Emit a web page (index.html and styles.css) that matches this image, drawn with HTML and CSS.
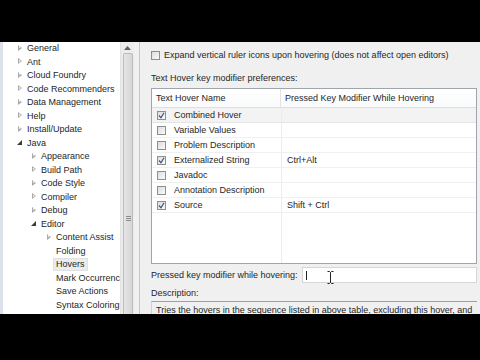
FILE: index.html
```html
<!DOCTYPE html>
<html>
<head>
<meta charset="utf-8">
<link rel="stylesheet" href="styles.css">
</head>
<body>
<div class="screen">
  <div class="bar"></div>
  <div class="window">
    <div class="tree-pane">
      <ul class="tree">
        <li class="row l0"><span class="tw closed"></span>General</li>
        <li class="row l0"><span class="tw closed"></span>Ant</li>
        <li class="row l0"><span class="tw closed"></span>Cloud Foundry</li>
        <li class="row l0"><span class="tw closed"></span>Code Recommenders</li>
        <li class="row l0"><span class="tw closed"></span>Data Management</li>
        <li class="row l0"><span class="tw closed"></span>Help</li>
        <li class="row l0"><span class="tw closed"></span>Install/Update</li>
        <li class="row l0"><span class="tw open"></span>Java</li>
        <li class="row l1"><span class="tw closed"></span>Appearance</li>
        <li class="row l1"><span class="tw closed"></span>Build Path</li>
        <li class="row l1"><span class="tw closed"></span>Code Style</li>
        <li class="row l1"><span class="tw closed"></span>Compiler</li>
        <li class="row l1"><span class="tw closed"></span>Debug</li>
        <li class="row l1"><span class="tw open"></span>Editor</li>
        <li class="row l2"><span class="tw closed"></span>Content Assist</li>
        <li class="row l2"><span class="tw none"></span>Folding</li>
        <li class="row l2"><span class="tw none"></span><span class="sel">Hovers</span></li>
        <li class="row l2"><span class="tw none"></span>Mark Occurrences</li>
        <li class="row l2"><span class="tw none"></span>Save Actions</li>
        <li class="row l2"><span class="tw none"></span>Syntax Coloring</li>
      </ul>
    </div>
    <div class="vscroll">
      <div class="arrow"><svg width="7" height="4" viewBox="0 0 7 4"><path d="M0 4 L3.5 0 L7 4 Z" fill="#606060"/></svg></div>
      <div class="thumb"><span class="grip"></span></div>
    </div>
    <div class="sash"></div>
    <div class="pane">
      <div class="check-row">
        <span class="cb"></span>
        <span>Expand vertical ruler icons upon hovering (does not affect open editors)</span>
      </div>
      <div class="title">Text Hover key modifier preferences:</div>
      <div class="table">
        <div class="thead">
          <div class="th">Text Hover Name</div>
          <div class="th">Pressed Key Modifier While Hovering</div>
        </div>
        <div class="tbody">
          <div class="tr first"><div class="td"><span class="cb checked"><svg width="7" height="7" viewBox="0 0 7 7"><path d="M1 3.5 L3 5.8 L6 0.8" fill="none" stroke="#3a4f7a" stroke-width="1.2"/></svg></span>Combined Hover</div><div class="td"></div></div>
          <div class="tr"><div class="td"><span class="cb"></span>Variable Values</div><div class="td"></div></div>
          <div class="tr"><div class="td"><span class="cb"></span>Problem Description</div><div class="td"></div></div>
          <div class="tr"><div class="td"><span class="cb checked"><svg width="7" height="7" viewBox="0 0 7 7"><path d="M1 3.5 L3 5.8 L6 0.8" fill="none" stroke="#3a4f7a" stroke-width="1.2"/></svg></span>Externalized String</div><div class="td">Ctrl+Alt</div></div>
          <div class="tr"><div class="td"><span class="cb"></span>Javadoc</div><div class="td"></div></div>
          <div class="tr"><div class="td"><span class="cb"></span>Annotation Description</div><div class="td"></div></div>
          <div class="tr"><div class="td"><span class="cb checked"><svg width="7" height="7" viewBox="0 0 7 7"><path d="M1 3.5 L3 5.8 L6 0.8" fill="none" stroke="#3a4f7a" stroke-width="1.2"/></svg></span>Source</div><div class="td">Shift + Ctrl</div></div>
        </div>
      </div>
      <div class="mod-row">
        <span class="label">Pressed key modifier while hovering:</span>
        <div class="input"><span class="caret"></span>
          <svg class="ibeam" width="7" height="13" viewBox="0 0 7 13"><path d="M0.5 0.5 H2.5 L3.5 1.5 L4.5 0.5 H6.5 M3.5 1.5 V11.5 M0.5 12.5 H2.5 L3.5 11.5 L4.5 12.5 H6.5" fill="none" stroke="#222" stroke-width="1"/></svg>
        </div>
      </div>
      <div class="desc-label">Description:</div>
      <div class="desc">Tries the hovers in the sequence listed in above table, excluding this hover, and</div>
    </div>
  </div>
  <div class="bar"></div>
</div>
</body>
</html>
```

FILE: styles.css
```css
* { box-sizing: border-box; }
html, body { margin: 0; padding: 0; background: #000; }
body {
  width: 480px;
  height: 360px;
  overflow: hidden;
  font-family: "Liberation Sans", Arial, sans-serif;
  font-size: 9px;
  color: #262626;
}
.screen { display: flex; flex-direction: column; height: 360px; }
.bar { background: #000; flex: 0 0 42px; }
.bar:last-child { flex: 1 1 auto; }
.window {
  flex: 0 0 272px;
  display: flex;
  overflow: hidden;
  background: #f0f0f0;
}
.tree-pane {
  width: 120px;
  flex: 0 0 120px;
  background: #fff;
  border-left: 3px solid #dbe2ea;
  overflow: hidden;
}
.tree { list-style: none; margin: -0.75px 0 0 0; padding: 0; }
.row {
  height: 13.5px;
  display: flex;
  align-items: center;
  white-space: nowrap;
}
.l0 { padding-left: 12px; }
.l1 { padding-left: 26px; }
.l2 { padding-left: 41px; }
.tw {
  width: 9px;
  height: 9px;
  margin-right: 3px;
  flex: 0 0 9px;
  position: relative;
}
.tw.closed::before {
  content: "";
  position: absolute;
  left: 3px; top: 1px;
  width: 0; height: 0;
  border-top: 3.5px solid transparent;
  border-bottom: 3.5px solid transparent;
  border-left: 4px solid #a9a9a9;
}
.tw.closed::after {
  content: "";
  position: absolute;
  left: 4px; top: 2.6px;
  width: 0; height: 0;
  border-top: 1.9px solid transparent;
  border-bottom: 1.9px solid transparent;
  border-left: 2px solid #fff;
}
.tw.open::before {
  content: "";
  position: absolute;
  left: 2px; top: 2px;
  width: 0; height: 0;
  border-left: 5px solid transparent;
  border-bottom: 5px solid #3c3c3c;
}
.sel {
  background: #ececec;
  border: 1px solid #e0e0e0;
  padding: 0 2px;
  margin-left: -3px;
  line-height: 11px;
}
.vscroll {
  width: 14px;
  flex: 0 0 14px;
  background: #ececec;
  border-left: 1px solid #e2e2e2;
  display: flex;
  flex-direction: column;
  align-items: center;
}
.arrow { height: 9px; display: flex; align-items: center; justify-content: center; padding-top: 2px; }
.thumb {
  margin-top: 2px;
  width: 10px;
  flex: 1 1 auto;
  background: linear-gradient(to right, #e6e6e6, #d6d6d6);
  border: 1px solid #bcbcbc;
  border-bottom: none;
  border-radius: 2px 2px 0 0;
  position: relative;
}
.grip {
  position: absolute;
  left: 2px; top: 162px;
  width: 5px; height: 5px;
  border-top: 1px solid #8c8c8c;
  border-bottom: 1px solid #8c8c8c;
}
.grip::after {
  content: ""; position: absolute; left: 0; top: 1px; width: 5px; height: 1px; background: #8c8c8c;
}
.sash { width: 6px; flex: 0 0 6px; background: #f0f0f0; border-right: 1px solid #c8c8c8; }
.pane {
  flex: 1 1 auto;
  padding: 0 3px 0 11px;
  display: flex;
  flex-direction: column;
  white-space: nowrap;
  overflow: hidden;
}
.pane > * { flex-shrink: 0; }
.check-row {
  margin-top: 6px;
  height: 14px;
  display: flex;
  align-items: center;
  gap: 4px;
}
.cb {
  width: 9px; height: 9px;
  flex: 0 0 9px;
  border: 1px solid #8e8f8f;
  background: linear-gradient(135deg, #dcdcdc, #fbfbfb);
  display: inline-flex;
  align-items: center;
  justify-content: center;
}
.cb svg { display: block; }
.title { margin-top: 9px; height: 14px; line-height: 14px; }
.table {
  margin-top: 3px;
  height: 176px;
  background: #fff;
  border: 1px solid #a0a4ab;
  display: flex;
  flex-direction: column;
}
.thead {
  height: 19px;
  flex: 0 0 19px;
  display: grid;
  grid-template-columns: 129px 1fr;
  border-bottom: 1px solid #dedede;
  background: linear-gradient(#fff, #f9fafb);
}
.th { padding-left: 4px; display: flex; align-items: center; }
.th:first-child { border-right: 1px solid #e3e3e3; }
.tbody {
  flex: 1 1 auto;
  background: linear-gradient(to right, transparent 129px, #ececec 129px, #ececec 130px, transparent 130px);
}
.tr {
  height: 15px;
  display: grid;
  grid-template-columns: 129px 1fr;
  border-bottom: 1px solid #f0f0f0;
}
.tr.first { background: #f3f3f3; border-bottom: 1px solid #e4e4e4; }
.td { display: flex; align-items: center; padding-left: 5px; gap: 8px; }
.td + .td { padding-left: 5px; border-left: 1px solid #ececec; }
.mod-row {
  margin-top: 3px;
  height: 16px;
  display: flex;
  align-items: center;
  gap: 4px;
}
.input {
  flex: 1 1 auto;
  height: 16px;
  background: #fff;
  border: 1px solid #d6d6d6;
  position: relative;
}
.caret {
  position: absolute;
  left: 3px; top: 3px;
  width: 1px; height: 9px;
  background: #222;
}
.ibeam { position: absolute; left: 24px; top: 3px; }
.desc-label { margin-top: 3px; height: 14px; line-height: 14px; }
.desc {
  margin-top: 1px;
  border-top: 1px solid #a0a0a0;
  border-left: 1px solid #d0d0d0;
  padding: 3px 0 0 4px;
  height: 20px;
  line-height: 11px;
}
```
